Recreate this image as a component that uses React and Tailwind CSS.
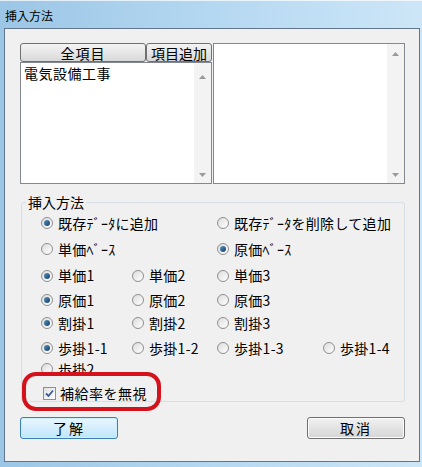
import { useState } from 'react';

const FONT = { fontFamily: '"Noto Sans CJK JP", "Noto Sans", sans-serif' };

function Radio({ checked, label }) {
  return (
    <div className="flex items-center gap-[5px]">
      <span className="relative w-[12px] h-[12px] rounded-full border border-[#8f8f8f] bg-gradient-to-br from-[#dcdcdc] to-[#ffffff] flex items-center justify-center shrink-0">
        {checked && <span className="w-[6px] h-[6px] rounded-full bg-gradient-to-br from-[#5a93bf] to-[#123f66]" />}
      </span>
      <span className="whitespace-nowrap tracking-[0.3px]">{label}</span>
    </div>
  );
}

function Arrow({ up }) {
  return (
    <svg width="7" height="4" viewBox="0 0 7 4">
      <path d={up ? 'M0 4 L3.5 0 L7 4 Z' : 'M0 0 L3.5 4 L7 0 Z'} fill="#9a9a9a" />
    </svg>
  );
}

function ListBox({ className, items = [], topArrow }) {
  return (
    <div className={`flex border border-[#828790] bg-white ${className}`}>
      <div className="flex-1 pl-[3px] pt-[2px] text-[14px] leading-[16px]">
        {items.map(it => (
          <div key={it} className="tracking-[0.5px]">{it}</div>
        ))}
      </div>
      <div className="w-[17px] bg-[#f3f3f3] flex flex-col items-center justify-between pb-[6px]" style={{ paddingTop: topArrow }}>
        <Arrow up />
        <Arrow />
      </div>
    </div>
  );
}

export default function App() {
  const [ignore, setIgnore] = useState(true);

  return (
    <div className="w-[422px] h-[467px] overflow-hidden bg-gradient-to-r from-[#9cc6e6] via-[#b4d8f1] to-[#cde6f7] text-black" style={FONT}>
      {/* title bar */}
      <div className="h-[28px] flex items-center pl-[5px] pt-[2px] text-[12px] border-t border-white/70">
        挿入方法
      </div>

      {/* client area */}
      <div className="relative ml-[4px] w-[416px] h-[434px] border border-[#62758a] bg-[#f0f0f0]">
        <div className="flex pl-[15px] pt-[14px]">
          <div className="w-[192px] flex flex-col">
            <div className="flex h-[19px] text-[14px]">
              <button className="w-[126px] h-[19px] rounded-[3px] border border-[#707070] bg-gradient-to-b from-[#f4f4f4] to-[#d9d9d9] leading-none tracking-[1px]">全項目</button>
              <button className="w-[66px] h-[19px] rounded-[3px] border border-[#707070] bg-gradient-to-b from-[#f4f4f4] to-[#d9d9d9] leading-none">項目追加</button>
            </div>
            <ListBox className="h-[122px]" items={['電気設備工事']} topArrow="12px" />
          </div>
          <ListBox className="ml-[1px] w-[192px] h-[141px]" topArrow="8px" />
        </div>

        <fieldset className="ml-[16px] mt-[10px] w-[384px] border border-[#d5dfe5] rounded-[3px] px-[4px] text-[14px]">
          <legend className="px-[2px] leading-[16px]">挿入方法</legend>
          <div className="pl-[15px]">
            <div className="h-[26px] flex items-center">
              <div className="w-[176px]"><Radio checked label="既存ﾃﾞｰﾀに追加" /></div>
              <Radio label="既存ﾃﾞｰﾀを削除して追加" />
            </div>
            <div className="h-[26px] flex items-center">
              <div className="w-[176px]"><Radio label="単価ﾍﾞｰｽ" /></div>
              <Radio checked label="原価ﾍﾞｰｽ" />
            </div>
            <div className="h-[27px] flex items-center">
              <div className="w-[91px]"><Radio checked label="単価1" /></div>
              <div className="w-[85px]"><Radio label="単価2" /></div>
              <Radio label="単価3" />
            </div>
            <div className="h-[22px] flex items-center">
              <div className="w-[91px]"><Radio checked label="原価1" /></div>
              <div className="w-[85px]"><Radio label="原価2" /></div>
              <Radio label="原価3" />
            </div>
            <div className="h-[24px] flex items-center">
              <div className="w-[91px]"><Radio checked label="割掛1" /></div>
              <div className="w-[85px]"><Radio label="割掛2" /></div>
              <Radio label="割掛3" />
            </div>
            <div className="h-[26px] flex items-center">
              <div className="w-[91px]"><Radio checked label="歩掛1-1" /></div>
              <div className="w-[85px]"><Radio label="歩掛1-2" /></div>
              <div className="w-[106px]"><Radio label="歩掛1-3" /></div>
              <Radio label="歩掛1-4" />
            </div>
            <div className="h-[13px] overflow-hidden">
              <div className="h-[16px] flex items-center"><Radio label="歩掛2" /></div>
            </div>
            <div className="h-[27px] pt-[11px] flex items-center">
              <label className="flex items-center gap-[4px] pl-[2px] cursor-pointer" onClick={() => setIgnore(v => !v)}>
                <span className="w-[13px] h-[13px] border border-[#8f8f8f] bg-gradient-to-br from-[#e0e0e0] to-white flex items-center justify-center">
                  {ignore && (
                    <svg width="9" height="9" viewBox="0 0 9 9">
                      <path d="M1 4.5 L3.5 7 L8 1.5" stroke="#3d5a96" strokeWidth="1.8" fill="none" />
                    </svg>
                  )}
                </span>
                <span className="tracking-[0.5px]">補給率を無視</span>
              </label>
            </div>
          </div>
        </fieldset>

        <div className="flex justify-between pl-[15px] pr-[14px] mt-[15px] text-[14px]">
          <button className="w-[98px] h-[22px] rounded-[3px] border border-[#3c7fb1] bg-gradient-to-b from-[#eaf6fd] to-[#bee6fd] shadow-[inset_0_0_0_1px_#cdeefb] leading-none tracking-[2px]">了解</button>
          <button className="w-[98px] h-[22px] rounded-[3px] border border-[#707070] bg-gradient-to-b from-[#f2f2f2] to-[#d5d5d5] shadow-[inset_0_0_0_1px_#fcfcfc] leading-none tracking-[2px]">取消</button>
        </div>

        {/* red annotation */}
        <div className="absolute left-[17px] top-[343px] w-[139px] h-[39px] rounded-[14px] border-[4px] border-[#d3121c] pointer-events-none" />
      </div>
    </div>
  );
}
